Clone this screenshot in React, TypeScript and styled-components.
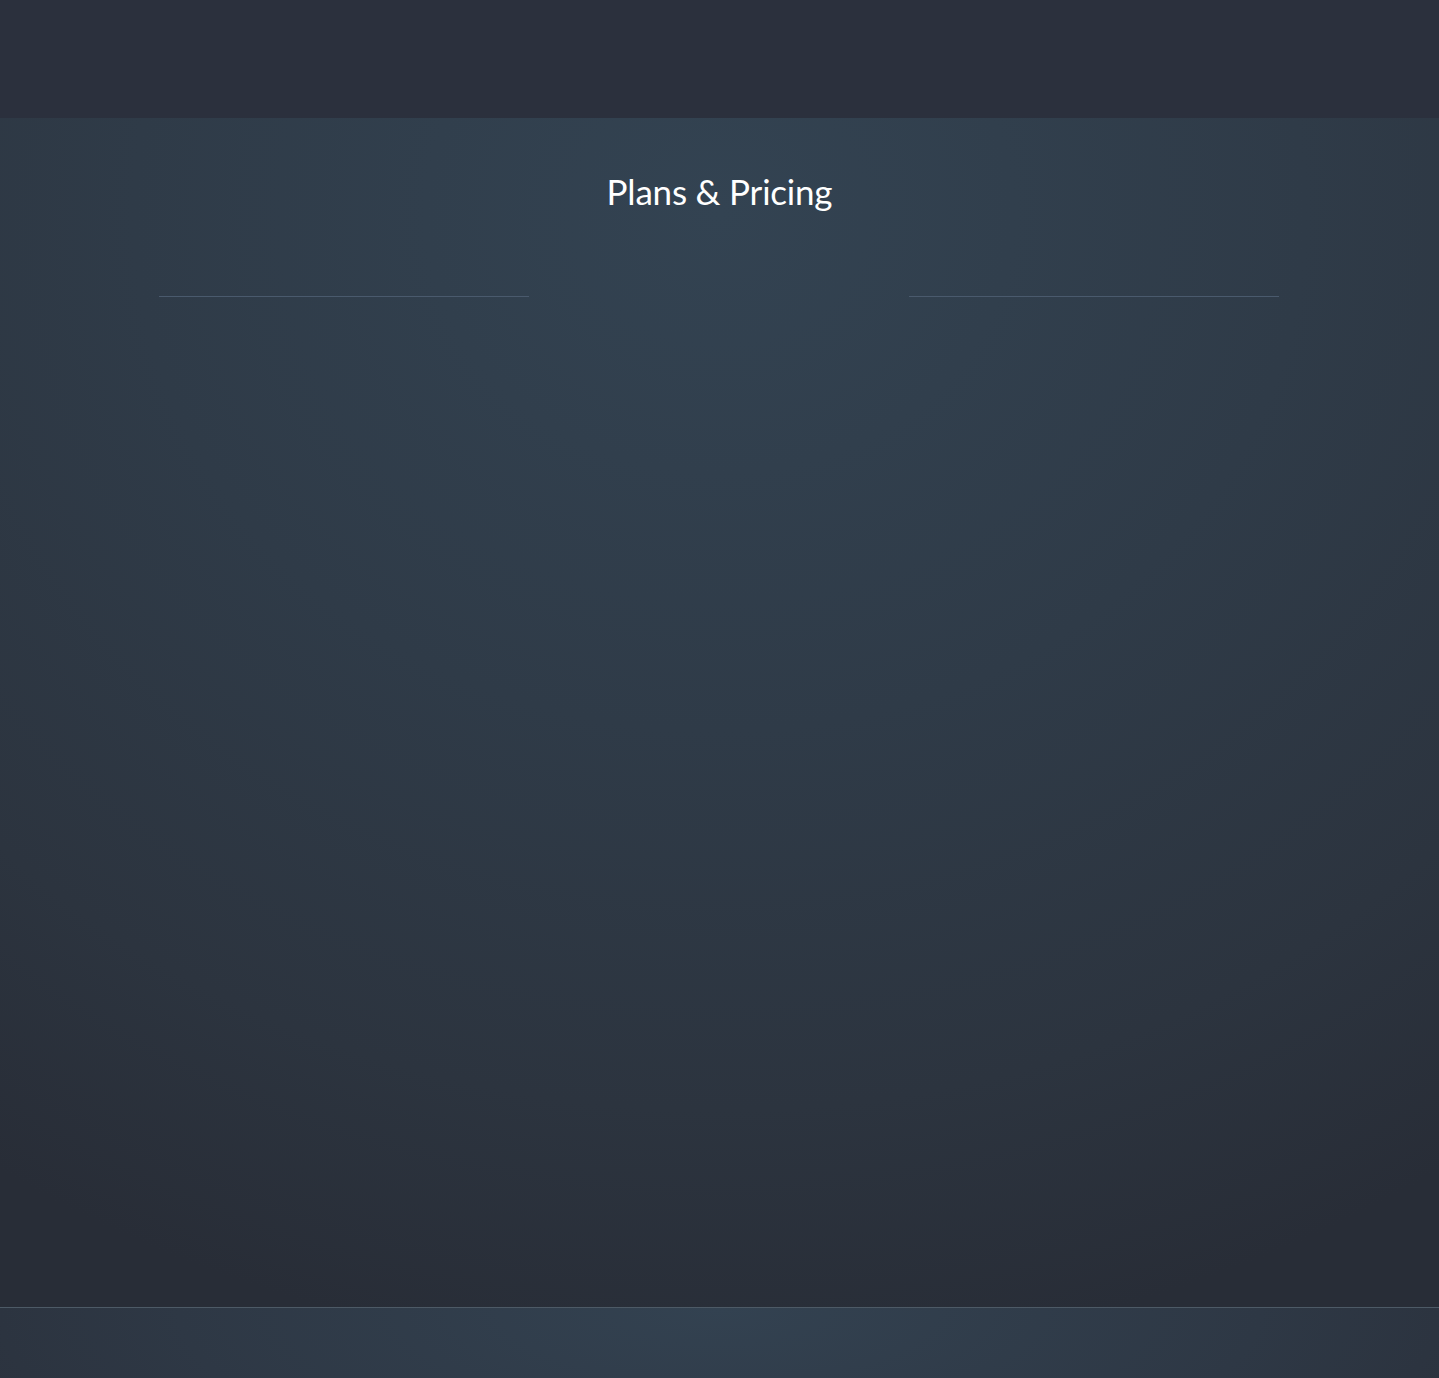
import React from "react";
import styled, { createGlobalStyle } from "styled-components";

const Global = createGlobalStyle`
  html, body { margin: 0; padding: 0; background: #2a2f3b; }
  body { font-family: "Lato", "Open Sans", sans-serif; }
`;

const Page = styled.div`
  display: flex;
  flex-direction: column;
  min-height: 1378px;
`;

const Header = styled.header`
  height: 118px;
  background: #2b303d;
`;

const Main = styled.main`
  height: 1189px;
  background: radial-gradient(ellipse 1300px 1150px at 50% 8%, #334352 0%, #2f3b48 45%, #2c343f 78%, #282d37 100%);
  display: flex;
  flex-direction: column;
  align-items: center;
`;

const Title = styled.h1`
  margin: 50px 0 0;
  font-family: "Lato", "Open Sans", sans-serif;
  font-weight: 400;
  font-size: 35px;
  line-height: 46px;
  color: #ffffff;
  letter-spacing: -0.2px;
`;

const Plans = styled.div`
  margin-top: 82px;
  margin-right: 1px;
  width: 1120px;
  display: grid;
  grid-template-columns: 370px 380px 370px;
`;

const PlanCard = styled.div<{ $bordered?: boolean }>`
  border-top: 1px solid ${(p) => (p.$bordered ? "#4a5a6d" : "transparent")};
  min-height: 10px;
`;

const Footer = styled.footer`
  height: 70px;
  border-top: 1px solid #4d5a66;
  background: radial-gradient(ellipse 900px 300px at 50% 0%, #334251 0%, #2e3845 60%, #2a303b 100%);
`;

export default function App() {
  return (
    <>
      <Global />
      <Page>
        <Header />
        <Main>
          <Title>Plans &amp; Pricing</Title>
          <Plans>
            <PlanCard $bordered />
            <PlanCard />
            <PlanCard $bordered />
          </Plans>
        </Main>
        <Footer />
      </Page>
    </>
  );
}
